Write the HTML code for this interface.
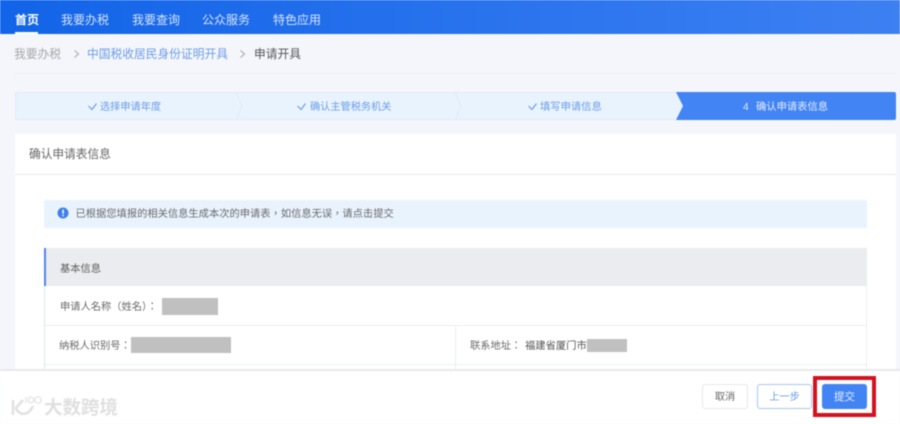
<!DOCTYPE html>
<html><head><meta charset="utf-8">
<style>
*{margin:0;padding:0;box-sizing:border-box}
html,body{width:900px;height:424px;overflow:hidden;background:#f4f6fb}
body{position:relative;font-family:"Liberation Sans","Noto Sans CJK SC",sans-serif;color:#555}
#w{position:absolute;left:0;top:0;width:900px;height:424px;overflow:hidden;background:#f4f6fb;filter:blur(.4px)}
.a{position:absolute;white-space:nowrap}
.p{font-family:"Liberation Sans","Noto Sans CJK TC",sans-serif}
</style></head><body><div id="w">
<div class="a" style="left:0;top:0;width:900px;height:34px;background:linear-gradient(90deg,#1264e8,#3d80f2)"></div>
<div class="a" style="left:15px;top:11.500px;font-size:12px;line-height:16px;color:#fff;font-weight:bold">首页</div>
<div class="a" style="left:15px;top:32px;width:23px;height:2px;background:#fff"></div>
<div class="a" style="left:61px;top:11.500px;font-size:12px;line-height:16px;color:#d5e3fc">我要办税</div>
<div class="a" style="left:132px;top:11.500px;font-size:12px;line-height:16px;color:#d5e3fc">我要查询</div>
<div class="a" style="left:202px;top:11.500px;font-size:12px;line-height:16px;color:#d5e3fc">公众服务</div>
<div class="a" style="left:273px;top:11.500px;font-size:12px;line-height:16px;color:#d5e3fc">特色应用</div>

<div class="a" style="left:14px;top:47px;font-size:11.75px;line-height:16px;color:#a8a8a8">我要办税</div>
<svg class="a" style="left:72px;top:49px" width="10" height="10"><path d="M2.5 1.5L6.5 5L2.5 8.5" fill="none" stroke="#aaa" stroke-width="1.1"/></svg>
<div class="a" style="left:87px;top:47px;font-size:11.75px;line-height:16px;color:#6b9de8">中国税收居民身份证明开具</div>
<svg class="a" style="left:238px;top:49px" width="10" height="10"><path d="M2.5 1.5L6.5 5L2.5 8.5" fill="none" stroke="#aaa" stroke-width="1.1"/></svg>
<div class="a" style="left:254px;top:47px;font-size:11.75px;line-height:16px;color:#555">申请开具</div>
<div class="a" style="left:15px;top:73px;width:881px;height:1px;background:#e9ebef"></div>

<svg class="a" style="left:15px;top:92px" width="882" height="28">
<rect x=".5" y=".5" width="669" height="27" fill="#e9f3fe" stroke="#e0ebf8"/>
<path d="M221 0L227 14L221 28M440 0L446 14L440 28" fill="none" stroke="#e0ebf8"/>
<path d="M661 0H879a2 2 0 0 1 2 2V26a2 2 0 0 1-2 2H661L668 14Z" fill="#4284f3"/>
<path d="M73.500 14L77 17.500L81.500 11.500M282.500 14L286 17.500L290.500 11.500M513.500 14L517 17.500L521.500 11.500" fill="none" stroke="#6d9fe8" stroke-width="1.2"/>
</svg>
<div class="a" style="left:100px;top:101px;font-size:10.2px;line-height:14px;color:#6b9de8">选择申请年度</div>
<div class="a" style="left:310px;top:101px;font-size:10.2px;line-height:14px;color:#6b9de8">确认主管税务机关</div>
<div class="a" style="left:540px;top:101px;font-size:10.3px;line-height:14px;color:#6b9de8">填写申请信息</div>
<div class="a" style="left:743px;top:101px;font-size:10.3px;line-height:14px;color:#e3edfd">4</div>
<div class="a" style="left:756px;top:101px;font-size:10.3px;line-height:14px;color:#e3edfd">确认申请表信息</div>

<div class="a" style="left:15px;top:134px;width:881px;height:290px;background:#fff"></div>
<div class="a" style="left:15px;top:174px;width:881px;height:1px;background:#e8eaee"></div>
<div class="a" style="left:29px;top:147px;font-size:11.7px;line-height:16px;color:#666">确认申请表信息</div>

<div class="a" style="left:44px;top:200px;width:823px;height:28px;background:#e9f3fe;border-radius:2px"></div>
<svg class="a" style="left:57px;top:207px" width="12" height="12"><circle cx="6" cy="6" r="5.500" fill="#3f7fe8"/><rect x="5.300" y="2.600" width="1.500" height="4.200" fill="#fff"/><rect x="5.300" y="7.800" width="1.500" height="1.500" fill="#fff"/></svg>
<div class="a" style="left:75.500px;top:208px;font-size:10.27px;line-height:14px;color:#6a6a6a">已根据您填报的相关信息生成本次的申请表<span class="p">，</span>如信息无误<span class="p">，</span>请点击提交</div>

<div class="a" style="left:44px;top:248px;width:823px;height:122px;background:#fff;border-left:1px solid #dfe7f2;border-right:1px solid #eceef1"></div>
<div class="a" style="left:44px;top:248px;width:823px;height:38px;background:#ebecef;border-left:2px solid #4f87e6"></div>
<div class="a" style="left:60px;top:263px;font-size:10.25px;line-height:14px;color:#5c5c5c">基本信息</div>
<div class="a" style="left:45px;top:325px;width:822px;height:1px;background:#eceef1"></div>
<div class="a" style="left:45px;top:364px;width:822px;height:1px;background:#eceef1"></div>
<div class="a" style="left:455px;top:325px;width:1px;height:45px;background:#eceef1"></div>
<div class="a p" style="left:60px;top:301px;font-size:10.25px;line-height:14px;color:#6a6a6a">申请人名称（姓名）：</div>
<div class="a" style="left:162px;top:298px;width:56px;height:17px;background:#c0c0c0"></div>
<div class="a p" style="left:59px;top:340px;font-size:10.25px;line-height:14px;color:#6a6a6a">纳税人识别号：</div>
<div class="a" style="left:131px;top:337px;width:100px;height:16px;background:#c0c0c0"></div>
<div class="a p" style="left:470px;top:340px;font-size:10.25px;line-height:14px;color:#6a6a6a">联系地址：</div>
<div class="a" style="left:525px;top:340px;font-size:10.3px;line-height:14px;color:#555">福建省厦门市</div>
<div class="a" style="left:587px;top:339px;width:40px;height:13px;background:#c0c0c0"></div>

<div class="a" style="left:0;top:369px;width:900px;height:2px;background:#e9e9eb"></div>
<div class="a" style="left:0;top:371px;width:900px;height:53px;background:#fff"></div>

<svg class="a" style="left:8px;top:395px" width="36" height="24"><g fill="none" stroke="#e2e2e2" stroke-width="2.600"><path d="M5 5V20"/><path d="M15 5L8 13C10 20 20 22 25 11"/></g><g fill="none" stroke="#e2e2e2" stroke-width="1.200"><path d="M18 2V8"/><circle cx="23" cy="5" r="2.800"/><circle cx="30" cy="5" r="3.200"/></g></svg>
<div class="a" style="left:44px;top:398px;font-size:18.500px;line-height:20px;color:#e0e0e0;font-weight:bold">大数跨境</div>

<div class="a" style="left:702px;top:384px;width:46px;height:25px;background:#fff;border:1px solid #e8e8e8;border-radius:3px;font-size:10.2px;line-height:25px;text-align:center;color:#666">取消</div>
<div class="a" style="left:757px;top:384px;width:55px;height:25px;background:#fff;border:1px solid #a9c6f2;border-radius:3px;font-size:10.2px;line-height:25px;text-align:center;color:#6b9de8">上一步</div>
<div class="a" style="left:813px;top:376px;width:63px;height:41px;border:4px solid #d2121f"></div>
<div class="a" style="left:822px;top:384px;width:45px;height:25px;background:#4284f3;border-radius:3px;font-size:10.5px;line-height:26px;text-align:center;color:#e8f0fe">提交</div>
</div></body></html>
